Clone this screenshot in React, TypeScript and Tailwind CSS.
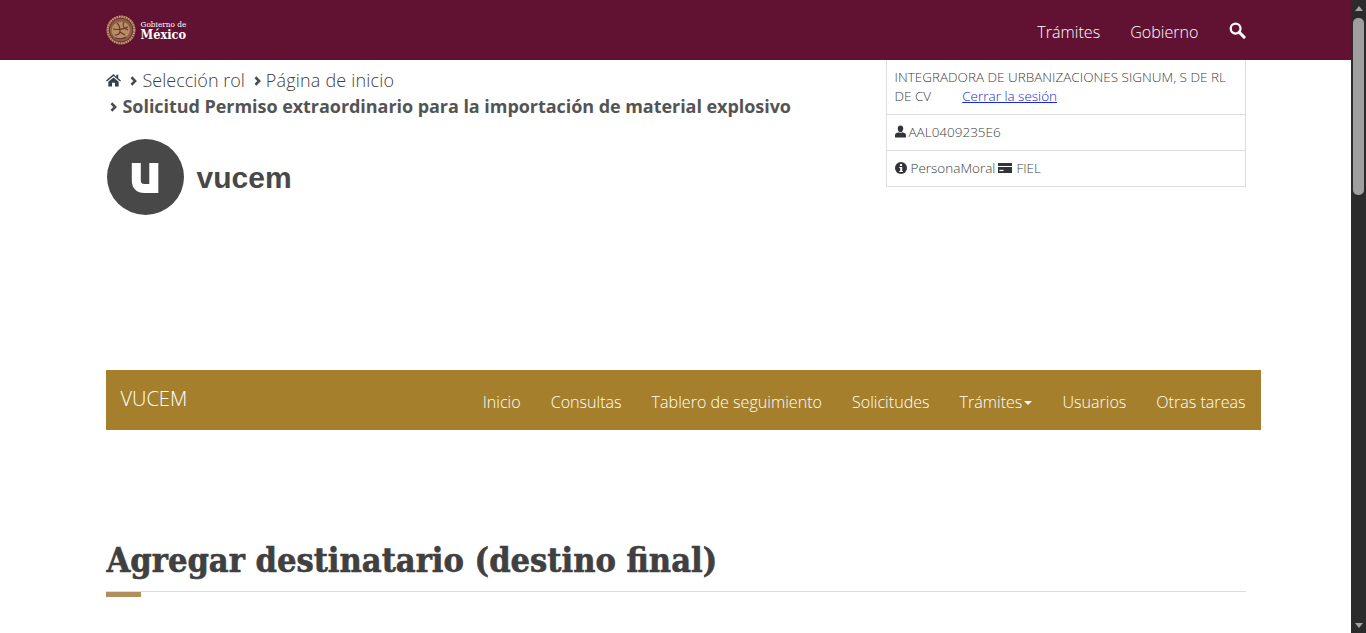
const openSans = "font-['Open_Sans',sans-serif]";

const Chevron = ({ className }: { className: string }) => (
    <svg viewBox="0 0 8 12" className={className} aria-hidden="true">
        <path d="M1.500 1.500 6 6l-4.500 4.500" fill="none" stroke="#4a4a4a" strokeWidth="3" />
    </svg>
);

const Seal = () => (
    <svg viewBox="0 0 30 30" className="h-[30px] w-[30px]" aria-hidden="true">
        <circle cx="15" cy="15" r="14.600" fill="#6f2c38" />
        <circle cx="15" cy="15" r="13.300" fill="none" stroke="#c09a68" strokeWidth="2.200" strokeDasharray="1.800 .6" />
        <circle cx="15" cy="15" r="11.200" fill="#8b5f48" />
        <path d="M7 11c3-5 12-6 15-1 3 4 2 9-2 12-4 2-9 2-12-1-3-3-3-6-1-10Z" fill="#b68f60" />
        <path d="M11 8c2 2 3 5 3 8s-2 4-5 4M18 7c-2 3-1 6 4 8M7 14c5 1 9 1 15-2M10 23c3 1 7 1 10-1M14 17l5 3" fill="none" stroke="#6f2c38" strokeWidth="1.100" />
    </svg>
);

const VucemMark = () => (
    <svg viewBox="0 0 77 76" className="h-[76px] w-[77px]" aria-hidden="true">
        <ellipse cx="38.500" cy="38" rx="38.500" ry="38" fill="#484848" />
        <path d="M29.300 24v17.500c0 5.500 3 8 8 8H45" fill="none" stroke="white" strokeWidth="9" />
        <rect x="42.300" y="24" width="9" height="30" fill="white" />
    </svg>
);

const MainNavItem = ({ label, caret }: { label: string; caret?: boolean }) => (
    <a className="flex items-center px-[15px] pt-[4px] text-[16.100px] font-light text-white">
        {label}
        {caret && <span className="ml-[2px] mt-[2px] h-0 w-0 border-x-[4px] border-t-[4px] border-x-transparent border-t-white" />}
    </a>
);

const App = () => {
    return (
        <div className={`flex h-[633px] w-full overflow-hidden bg-white ${openSans}`}>
            <div className="min-w-0 flex-1">
                <header className="h-[60px] bg-[#611232]">
                    <div className="mx-auto flex h-full w-[1140px] items-center justify-between">
                        <div className="flex items-center gap-[5px]">
                            <Seal />
                            <div className="font-['DejaVu_Serif_Condensed',serif] text-white">
                                <div className="mt-[1px] text-[8.200px] leading-[7px]">Gobierno de</div>
                                <div className="text-[12.700px] font-bold leading-[13px]">México</div>
                            </div>
                        </div>
                        <nav className="flex items-center text-[16.100px] font-light text-white">
                            <a className="pt-[4px]">Trámites</a>
                            <a className="ml-[30px] pt-[4px]">Gobierno</a>
                            <svg viewBox="0 0 18 18" className="ml-[30px] mt-[2px] h-[17px] w-[17px]" aria-hidden="true">
                                <circle cx="7" cy="7" r="5.200" fill="none" stroke="white" strokeWidth="2.400" />
                                <path d="m10.800 10.800 5.200 5.200" stroke="white" strokeWidth="3.200" strokeLinecap="round" />
                            </svg>
                        </nav>
                    </div>
                </header>

                <div className="mx-auto w-[1140px]">
                    <div className="flex h-[310px] justify-between">
                        <div>
                            <div className="mt-[7px] flex h-[26px] items-center text-[18px] font-light text-[#404041]">
                                <svg viewBox="0 0 16 14" className="h-[14px] w-[15px]" aria-hidden="true">
                                    <path d="M8 .6 0 7.600l1 1.100L8 2.800l7 5.900 1-1.100-3-2.600V1.500h-2v2.300Z" fill="#33404a" />
                                    <path d="M2.500 8.900 8 4.300l5.500 4.600V14H9.600v-4H6.400v4H2.500Z" fill="#33404a" />
                                </svg>
                                <Chevron className="ml-[9px] mr-[6px] mt-[2px] h-[10px] w-[7px]" />
                                <span>Selección rol</span>
                                <Chevron className="ml-[9px] mr-[5px] mt-[2px] h-[10px] w-[7px]" />
                                <span className="tracking-[0.18px]">Página de inicio</span>
                            </div>
                            <div className="flex h-[26px] items-center text-[18px] font-bold text-[#545454]">
                                <Chevron className="ml-[4px] mr-[6px] mt-[2px] h-[10px] w-[7px]" />
                                <span className="tracking-[-0.05px]">Solicitud Permiso extraordinario para la importación de material explosivo</span>
                            </div>
                            <div className="ml-[1px] mt-[20px] flex items-center">
                                <VucemMark />
                                <span className="ml-[13px] mt-[2px] font-['Liberation_Sans',sans-serif] text-[30px] font-bold leading-none text-[#484848]">
                                    vucem
                                </span>
                            </div>
                        </div>

                        <div className="h-[127px] w-[360px] border-x border-b border-[#dddddd] text-[13.500px] font-light text-[#404041]">
                            <div className="h-[55px] border-b border-[#dddddd] px-[8px] pt-[8px] leading-[19px]">
                                INTEGRADORA DE URBANIZACIONES SIGNUM, S DE RL DE CV
                                <a className="ml-[31px] text-[#1a28d8] underline">Cerrar la sesión</a>
                            </div>
                            <div className="flex h-[36px] items-center border-b border-[#dddddd] px-[8px]">
                                <svg viewBox="0 0 12 13" className="mb-[2px] mr-[3px] h-[13px] w-[11px]" aria-hidden="true">
                                    <path d="M6 0c1.900 0 3 1.400 3 3.300S8 7.400 6 7.400 3 5.200 3 3.300 4.100 0 6 0ZM0 13v-2.800C0 8.800 2 8 4 7.400c1 .9 3 .9 4 0 2 .6 4 1.400 4 2.800V13Z" fill="#33333b" />
                                </svg>
                                <span>AAL0409235E6</span>
                            </div>
                            <div className="flex h-[35px] items-center px-[8px]">
                                <svg viewBox="0 0 12 12" className="mb-[1px] mr-[4px] h-[12px] w-[12px]" aria-hidden="true">
                                    <circle cx="6" cy="6" r="6" fill="#33333b" />
                                    <rect x="5" y="2" width="2" height="2" fill="white" />
                                    <path d="M4.300 5h2.900v4h.8v1H4.300V9h.9V6h-.9Z" fill="white" />
                                </svg>
                                <span>PersonaMoral</span>
                                <svg viewBox="0 0 14 10" className="mb-[2px] ml-[3px] mr-[4px] h-[10px] w-[14px]" aria-hidden="true">
                                    <path d="M0 0h14v3H0Z" fill="#33333b" />
                                    <path d="M0 4h14v6H0Z" fill="#33333b" />
                                    <rect x="1.500" y="6.800" width="4" height="1.300" fill="white" />
                                </svg>
                                <span>FIEL</span>
                            </div>
                        </div>
                    </div>

                    <nav className="flex h-[60px] w-[1155px] items-stretch justify-between bg-[#a57f2c]">
                        <a className="pl-[15px] pt-[15px] text-[20px] font-light leading-[27px] text-white">VUCEM</a>
                        <div className="flex">
                            <MainNavItem label="Inicio" />
                            <MainNavItem label="Consultas" />
                            <MainNavItem label="Tablero de seguimiento" />
                            <MainNavItem label="Solicitudes" />
                            <MainNavItem label="Trámites" caret />
                            <MainNavItem label="Usuarios" />
                            <MainNavItem label="Otras tareas" />
                        </div>
                    </nav>

                    <h1 className="mt-[107px] h-[54px] pl-[1px] font-['DejaVu_Serif_Condensed',serif] text-[34.100px] font-bold leading-[46px] text-[#404041] [-webkit-text-stroke:0.6px_#404041]">
                        Agregar destinatario (destino final)
                    </h1>
                    <div className="h-px bg-[#dddddd]" />
                    <div className="h-[5px] w-[35px] bg-[#b38e5d]" />
                </div>
            </div>

            {/* scrollbar of the browser window */}
            <div className="flex h-full w-[15px] flex-col items-center bg-[#2b2b2b]">
                <span className="mt-[6px] h-0 w-0 border-x-[4px] border-b-[5px] border-x-transparent border-b-[#a3a3a3]" />
                <div className="mt-[7px] h-[177px] w-[11px] rounded-[5px] bg-[#9f9f9f]" />
                <span className="mb-[5px] mt-auto h-0 w-0 border-x-[4px] border-t-[5px] border-x-transparent border-t-[#a3a3a3]" />
            </div>
        </div>
    );
};

export default App;
